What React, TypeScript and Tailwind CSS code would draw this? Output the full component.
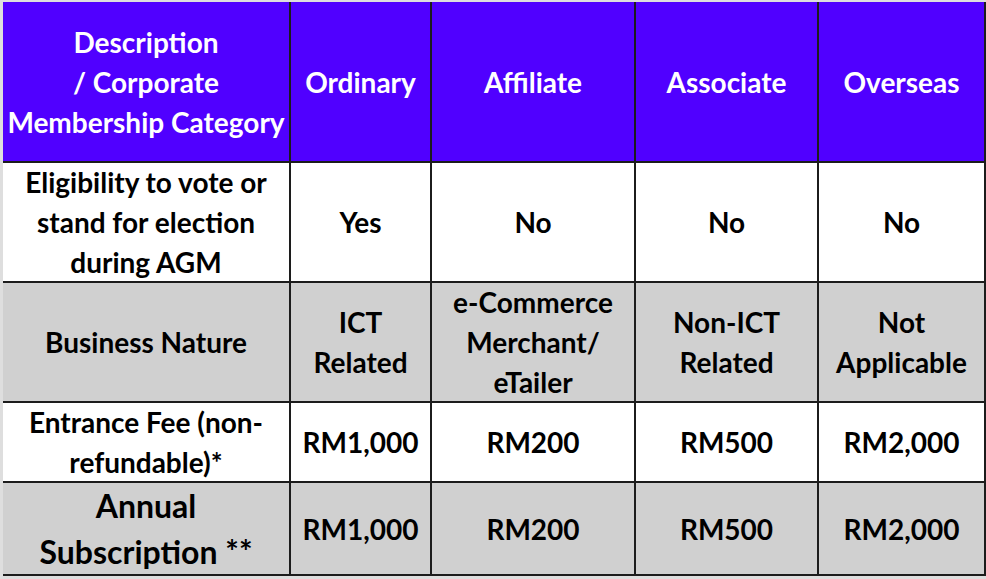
import React from "react";

const head = "bg-[#5000ff] text-white flex items-center justify-center text-center";
const white = "bg-white text-black flex items-center justify-center text-center";
const gray = "bg-[#d0d0d0] text-black flex items-center justify-center text-center";

export default function App() {
  return (
    <div
      className="w-[986px] h-[579px] bg-[#dedede] pl-[3px] pt-[2px] overflow-hidden"
      style={{ fontFamily: "Lato, 'Open Sans', sans-serif" }}
    >
      <div className="grid grid-cols-[286px_139px_202px_181px_165px] grid-rows-[159px_118px_118px_78px_91px] gap-[2px] bg-[#1c1c1c] pr-[2px] pb-[2px] w-fit font-bold text-[28px] leading-[40px]">
        <div className={head}>
          <div>Description<br />/ Corporate<br />Membership Category</div>
        </div>
        <div className={head}>Ordinary</div>
        <div className={head}>Affiliate</div>
        <div className={head}>Associate</div>
        <div className={head}>Overseas</div>

        <div className={white}>
          <div>Eligibility to vote or<br />stand for election<br />during AGM</div>
        </div>
        <div className={white}>Yes</div>
        <div className={white}>No</div>
        <div className={white}>No</div>
        <div className={white}>No</div>

        <div className={gray}>Business Nature</div>
        <div className={gray}><div>ICT<br />Related</div></div>
        <div className={gray}><div>e-Commerce<br />Merchant/<br />eTailer</div></div>
        <div className={gray}><div>Non-ICT<br />Related</div></div>
        <div className={gray}><div>Not<br />Applicable</div></div>

        <div className={white}><div>Entrance Fee (non-<br />refundable)*</div></div>
        <div className={white}>RM1,000</div>
        <div className={white}>RM200</div>
        <div className={white}>RM500</div>
        <div className={white}>RM2,000</div>

        <div className={gray}>
          <div className="text-[32px] leading-[46px]">Annual<br />Subscription **</div>
        </div>
        <div className={gray}>RM1,000</div>
        <div className={gray}>RM200</div>
        <div className={gray}>RM500</div>
        <div className={gray}>RM2,000</div>
      </div>
    </div>
  );
}
